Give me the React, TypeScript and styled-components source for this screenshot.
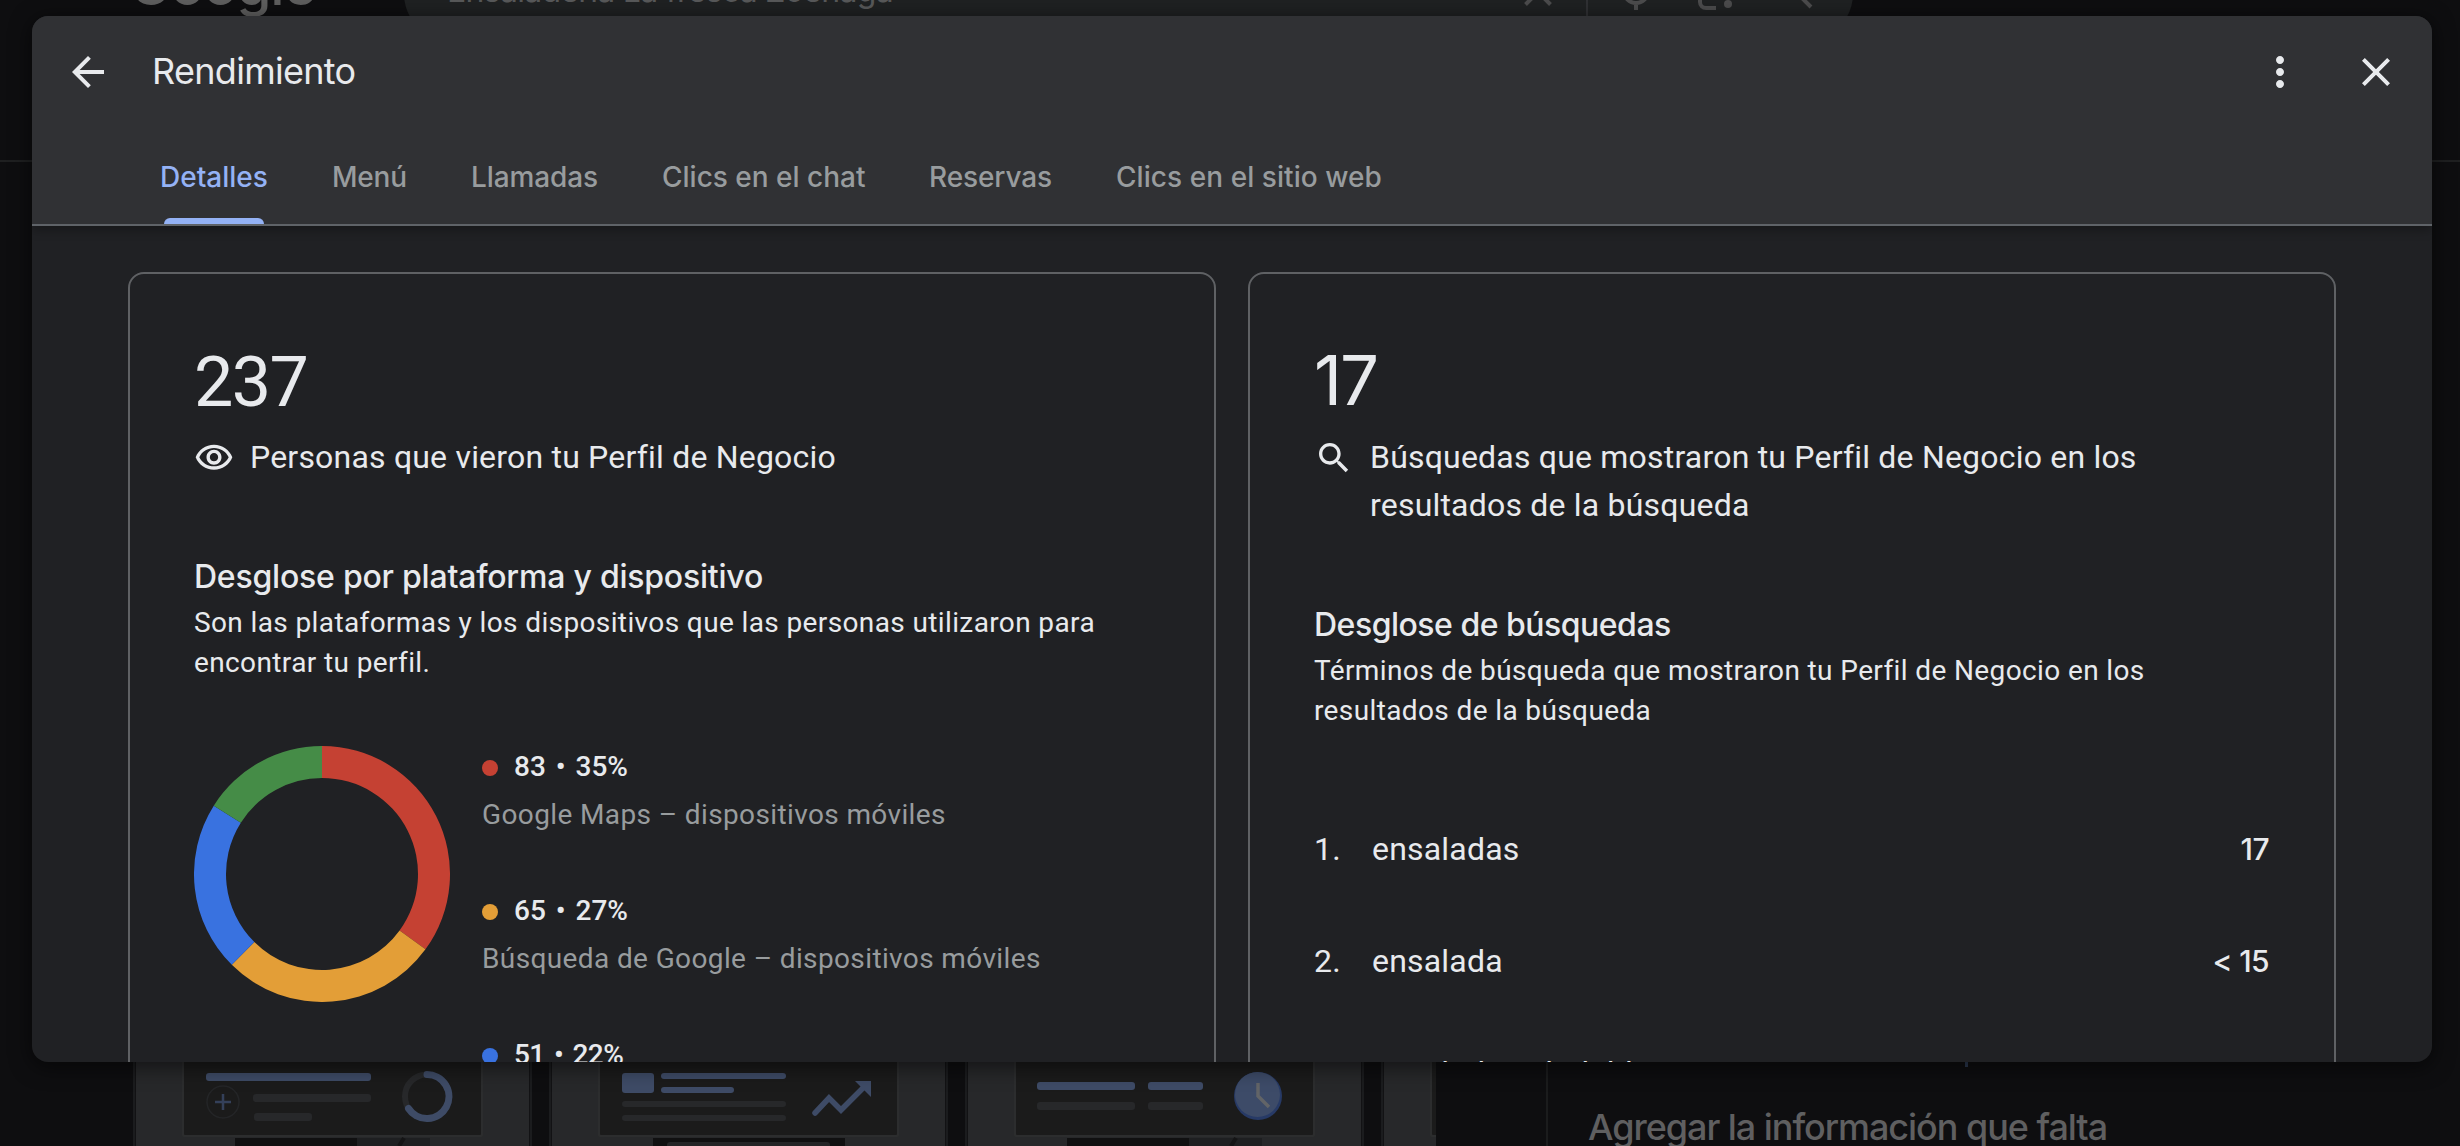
import React from "react";
import styled, { createGlobalStyle } from "styled-components";

const GOOGLE = `Inter, "Open Sans", sans-serif`;
const ROBOTO = `Roboto, "Noto Sans", sans-serif`;

const GlobalStyle = createGlobalStyle`
  *, *::before, *::after { box-sizing: border-box; }
  body { margin: 0; background: #0e0e10; overflow: hidden; -webkit-font-smoothing: antialiased; }
`;

const Screen = styled.div`
  position: relative;
  width: 2460px;
  height: 1146px;
  overflow: hidden;
  background: #0e0e10;
  font-family: ${ROBOTO};
`;

/* ---------- dimmed results page behind the dialog ---------- */

const Page = styled.div`
  display: flex;
  flex-direction: column;
  height: 1214px;
  margin-top: -68px;
`;

const PageHeader = styled.div`
  display: flex;
  flex: none;
  align-items: flex-start;
  height: 230px;
  padding: 16px 0 0 129px;
  border-bottom: 2px solid #1f2021;
`;

const Logo = styled.div`
  flex: none;
  width: 275px;
  padding-top: 2px;
  font: 500 57px/70px ${GOOGLE};
  letter-spacing: -1.4px;
  color: #5f5f5f;
`;

const SearchBar = styled.div`
  display: flex;
  flex: none;
  align-items: center;
  width: 1449px;
  height: 92px;
  padding: 0 24px 0 43px;
  border-radius: 46px;
  background: #1f2122;
`;

const Query = styled.div`
  flex: 1;
  padding-bottom: 6px;
  font: 400 32px/48px ${GOOGLE};
  letter-spacing: -0.7px;
  color: #58595a;
`;

const PageMain = styled.div`
  display: flex;
  flex: 1;
  padding-top: 900px;
`;

const TileStrip = styled.div`
  display: flex;
  flex: none;
  gap: 23px;
  width: 1304px;
  margin-left: 132px;
  padding-left: 4px;
  overflow: hidden;
`;

const Tile = styled.div`
  flex: none;
  width: 393px;
  height: 84px;
  background: #27282a;
  box-shadow: 0 0 0 1px #121214, 0 0 0 3px #1b1c1e;
`;

const SidePanel = styled.div`
  display: flex;
  flex-direction: column;
  margin-left: 110px;
  padding-left: 40px;
  border-left: 2px solid #1b1c1d;
`;

const SideLink = styled.div`
  height: 41px;
  padding-left: 377px;
`;

const SideLinkTail = styled.div`
  width: 3px;
  height: 5px;
  background: #2b3850;
`;

const SideTitle = styled.div`
  font: 500 36px/48px ${GOOGLE};
  letter-spacing: -1.05px;
  white-space: nowrap;
  color: #5f5f60;
`;

/* ---------- dialog ---------- */

const Dialog = styled.div`
  position: absolute;
  top: 16px;
  left: 32px;
  display: flex;
  flex-direction: column;
  width: 2400px;
  height: 1046px;
  overflow: hidden;
  border-radius: 16px;
  background: #202124;
  color: #e8eaed;
  box-shadow: 0 4px 20px 2px rgba(0, 0, 0, 0.5);
`;

const DialogHeader = styled.div`
  z-index: 1;
  flex: none;
  height: 210px;
  background: #303134;
  border-bottom: 2px solid #5f6368;
  box-shadow: 0 4px 10px rgba(0, 0, 0, 0.3);
`;

const TitleRow = styled.div`
  display: flex;
  align-items: center;
  height: 112px;
  padding: 0 32px;
`;

const Title = styled.div`
  flex: 1;
  margin-left: 40px;
  padding-bottom: 2px;
  font: 400 36px/48px ${GOOGLE};
  letter-spacing: -0.7px;
`;

const HeaderActions = styled.div`
  display: flex;
  gap: 48px;
`;

const TabRow = styled.div`
  display: flex;
  gap: 64px;
  height: 96px;
  padding-left: 128px;
`;

const Tab = styled.div<{ $active?: boolean; $width: number; $tracking?: number }>`
  position: relative;
  width: ${(p) => p.$width}px;
  padding-top: 29px;
  font: 500 28px/40px ${GOOGLE};
  letter-spacing: ${(p) => p.$tracking ?? 0}px;
  white-space: nowrap;
  color: ${(p) => (p.$active ? "#94b2f5" : "#989c9e")};
  ${(p) =>
    p.$active &&
    `&::after {
      content: "";
      position: absolute;
      left: 4px;
      right: 4px;
      bottom: 0;
      height: 6px;
      border-radius: 6px 6px 0 0;
      background: #94b2f5;
    }`}
`;

const CardRow = styled.div`
  display: flex;
  gap: 32px;
  padding: 46px 96px 0;
`;

const Card = styled.div`
  width: 1088px;
  height: 1100px;
  padding: 68px 64px 0;
  border: 2px solid #5f6164;
  border-radius: 16px;
`;

const BigNumber = styled.div`
  height: 80px;
  font: 400 70px/80px ${ROBOTO};
  letter-spacing: -1.6px;
`;

const NarrowBigNumber = styled(BigNumber)`
  font: 400 69px/77px ${GOOGLE};
  letter-spacing: -2px;
`;

const Metric = styled.div`
  display: flex;
  gap: 16px;
  margin-top: 11px;
  svg {
    flex: none;
    margin-top: 5px;
  }
`;

const MetricLabel = styled.div`
  font: 400 32px/48px ${ROBOTO};
  letter-spacing: 0.2px;
`;

const SectionTitle = styled.div<{ $tracking: number }>`
  margin-top: 72px;
  font: 500 32px/48px ${GOOGLE};
  letter-spacing: ${(p) => p.$tracking}px;
`;

const SectionText = styled.div`
  margin-top: 2px;
  font: 400 28px/40px ${ROBOTO};
  letter-spacing: 0.38px;
`;

const Breakdown = styled.div`
  display: flex;
  gap: 32px;
  margin-top: 63px;
`;

const Legend = styled.div`
  display: flex;
  flex-direction: column;
  gap: 56px;
  padding-top: 1px;
`;

const LegendItem = styled.div`
  display: flex;
  flex-direction: column;
  gap: 8px;
`;

const LegendValue = styled.div<{ $tracking?: number }>`
  display: flex;
  align-items: center;
  gap: 16px;
  height: 40px;
  font: 500 28px/40px ${ROBOTO};
  letter-spacing: ${(p) => p.$tracking ?? 0}px;
  word-spacing: 3px;
`;

const LegendDot = styled.span<{ $color: string }>`
  width: 16px;
  height: 16px;
  margin-top: 2px;
  border-radius: 50%;
  background: ${(p) => p.$color};
`;

const LegendLabel = styled.div`
  font: 400 28px/40px ${ROBOTO};
  letter-spacing: 0.38px;
  color: #989c9e;
`;

const TermList = styled.div`
  display: flex;
  flex-direction: column;
  margin-top: 62px;
`;

const Term = styled.div`
  display: flex;
  height: 112px;
  padding-top: 32px;
  font: 400 32px/48px ${ROBOTO};
  letter-spacing: 0.2px;
`;

const TermIndex = styled.div`
  width: 58px;
`;

const TermName = styled.div`
  flex: 1;
`;

const TermCount = styled.div`
  padding-right: 1px;
  font: 550 30px/48px ${GOOGLE};
  letter-spacing: -0.6px;
`;

/* ---------- drawings ---------- */

const Icon = ({ size, d, color = "currentColor" }: { size: number; d: string; color?: string }) => (
  <svg width={size} height={size} viewBox="0 0 24 24" fill={color}>
    <path d={d} />
  </svg>
);

const PATHS = {
  back: "M20 11H7.83l5.59-5.59L12 4l-8 8 8 8 1.41-1.41L7.83 13H20v-2z",
  more: "M12 8c1.1 0 2-.9 2-2s-.9-2-2-2-2 .9-2 2 .9 2 2 2zm0 2c-1.1 0-2 .9-2 2s.9 2 2 2 2-.9 2-2-.9-2-2-2zm0 6c-1.1 0-2 .9-2 2s.9 2 2 2 2-.9 2-2-.9-2-2-2z",
  close: "M19 6.41L17.59 5 12 10.59 6.41 5 5 6.41 10.59 12 5 17.59 6.41 19 12 13.41 17.59 19 19 17.59 13.41 12z",
  eye: "M12 6c3.79 0 7.17 2.13 8.82 5.5C19.17 14.87 15.79 17 12 17s-7.17-2.13-8.82-5.5C4.83 8.13 8.21 6 12 6m0-2C7 4 2.73 7.11 1 11.5 2.73 15.89 7 19 12 19s9.27-3.11 11-7.5C21.27 7.11 17 4 12 4zm0 5c1.38 0 2.5 1.12 2.5 2.5S13.38 14 12 14s-2.5-1.12-2.5-2.5S10.62 9 12 9m0-2c-2.48 0-4.5 2.02-4.5 4.5S9.52 16 12 16s4.5-2.02 4.5-4.5S14.48 7 12 7z",
  search: "M15.5 14h-.79l-.28-.27C15.41 12.59 16 11.11 16 9.5 16 5.91 13.09 3 9.5 3S3 5.91 3 9.5 5.91 16 9.5 16c1.61 0 3.09-.59 4.23-1.57l.27.28v.79l5 4.99L20.49 19l-4.99-5zm-6 0C7.01 14 5 11.99 5 9.5S7.01 5 9.5 5 14 7.01 14 9.5 11.99 14 9.5 14z",
};

const SearchTools = () => (
  <svg width="314" height="92" viewBox="1515 -52 314 92" fill="none" stroke="#4c4c4d" strokeWidth="4">
    <path d="M1525.5 -20.5L1550.5 4.5M1550.5 -20.5L1525.5 4.5" />
    <path d="M1587 -36V24" stroke="#303134" strokeWidth="2" />
    <path d="M1624 -9a12 12 0 0 0 24 0M1636 3V10" />
    <path d="M1716 8H1706a6 6 0 0 1 -6 -6V-4" />
    <circle cx="1728" cy="4" r="4" fill="#4c4c4d" stroke="none" />
    <circle cx="1792" cy="-12" r="9" />
    <path d="M1798 -6L1811 7" />
  </svg>
);

const SLICES = [
  { value: 83, color: "#c54133" },
  { value: 65, color: "#e39e37" },
  { value: 51, color: "#3972e0" },
  { value: 38, color: "#458c47" },
];

const Donut = () => {
  const total = SLICES.reduce((sum, s) => sum + s.value, 0);
  const at = (r: number, t: number) =>
    `${128 + r * Math.sin(t * 2 * Math.PI)} ${128 - r * Math.cos(t * 2 * Math.PI)}`;
  let start = 0;
  return (
    <svg width="256" height="256" viewBox="0 0 256 256">
      {SLICES.map((s) => {
        const a = start / total;
        start += s.value;
        const b = start / total;
        return (
          <path
            key={s.color}
            fill={s.color}
            d={`M${at(128, a)}A128 128 0 0 1 ${at(128, b)}L${at(96, b)}A96 96 0 0 0 ${at(96, a)}Z`}
          />
        );
      })}
    </svg>
  );
};

const BLUE = "#3e4b66";
const GREY = "#27282a";

const TileFrame = ({ children }: { children?: React.ReactNode }) => (
  <svg width="393" height="84" viewBox="0 0 393 84">
    <rect x="46" y="-10" width="301" height="85" rx="2" fill="#2c2d2e" />
    <rect x="48" y="-10" width="297" height="83" rx="1" fill="#1b1b1b" />
    {children}
  </svg>
);

const Bar = ({ x, y, w, h = 8, fill }: { x: number; y: number; w: number; h?: number; fill: string }) => (
  <rect x={x} y={y} width={w} height={h} rx={Math.min(h / 2, 3)} fill={fill} />
);

const PhoneStand = () => (
  <>
    <rect x="99" y="76" width="122" height="10" fill="#101011" />
    <rect x="221" y="76" width="73" height="10" fill="#1e1f21" />
    <path d="M263 84L268 76" stroke="#141415" strokeWidth="4" />
  </>
);

const ProfileTile = () => (
  <TileFrame>
    <Bar x={70} y={11} w={165} fill={BLUE} />
    <circle cx="87" cy="40" r="16" fill="none" stroke="#242527" strokeWidth="1.5" />
    <path d="M79 40H95M87 32V48" stroke="#34405a" strokeWidth="2.5" />
    <Bar x={117} y={32} w={118} fill={GREY} />
    <Bar x={118} y={51} w={58} fill={GREY} />
    <circle cx="291" cy="34.5" r="22" fill="none" stroke={GREY} strokeWidth="6" />
    <path d="M291 12.5A22 22 0 1 1 272.5 46.5" fill="none" stroke={BLUE} strokeWidth="7" strokeLinecap="round" />
    <PhoneStand />
  </TileFrame>
);

const GrowthTile = () => (
  <TileFrame>
    <rect x="70" y="11" width="32" height="20" rx="3" fill={BLUE} />
    <Bar x={109} y={11} w={125} h={6} fill={BLUE} />
    <Bar x={109} y={25} w={73} h={6} fill={BLUE} />
    <Bar x={70} y={39} w={164} h={6} fill={GREY} />
    <Bar x={70} y={53} w={164} h={6} fill={GREY} />
    <path d="M263 51L277 36L289 48L313 24" fill="none" stroke={BLUE} strokeWidth="5.5" strokeLinecap="round" />
    <path d="M303 19H319V35Z" fill={BLUE} />
    <rect x="101" y="76" width="192" height="10" fill="#101011" />
    <rect x="115" y="80" width="163" height="8" rx="3" fill="#242527" />
  </TileFrame>
);

const ScheduleTile = () => (
  <TileFrame>
    <Bar x={69} y={20} w={98} fill={BLUE} />
    <Bar x={180} y={20} w={55} fill={BLUE} />
    <Bar x={69} y={40} w={98} fill={GREY} />
    <Bar x={180} y={40} w={55} fill={GREY} />
    <circle cx="290" cy="34" r="24" fill="#273a66" />
    <circle cx="289.5" cy="32.5" r="22.5" fill="#3d4b68" />
    <path d="M290 21V34L301 45" fill="none" stroke="#626467" strokeWidth="3.5" />
    <PhoneStand />
  </TileFrame>
);

const LEGEND = [
  { color: "#c54133", value: "83 • 35%", label: "Google Maps – dispositivos móviles" },
  { color: "#e39e37", value: "65 • 27%", label: "Búsqueda de Google – dispositivos móviles" },
  { color: "#3972e0", value: "51 • 22%", tracking: -0.6 },
];

const TERMS = [
  { name: "ensaladas", count: "17" },
  { name: "ensalada", count: "< 15" },
  { name: "ensalada saludable" },
];

const TABS = [
  { label: "Detalles", width: 108 },
  { label: "Menú", width: 75, tracking: -0.2 },
  { label: "Llamadas", width: 127, tracking: -0.1 },
  { label: "Clics en el chat", width: 203 },
  { label: "Reservas", width: 123, tracking: -0.1 },
  { label: "Clics en el sitio web", width: 266, tracking: 0.06 },
];

export default function App() {
  return (
    <Screen>
      <GlobalStyle />
      <Page>
        <PageHeader>
          <Logo>Google</Logo>
          <SearchBar>
            <Query>Ensaladería La fresca Zoenaga</Query>
            <SearchTools />
          </SearchBar>
        </PageHeader>
        <PageMain>
          <TileStrip>
            <Tile><ProfileTile /></Tile>
            <Tile><GrowthTile /></Tile>
            <Tile><ScheduleTile /></Tile>
            <Tile><TileFrame /></Tile>
          </TileStrip>
          <SidePanel>
            <SideLink><SideLinkTail /></SideLink>
            <SideTitle>Agregar la información que falta</SideTitle>
          </SidePanel>
        </PageMain>
      </Page>

      <Dialog>
        <DialogHeader>
          <TitleRow>
            <Icon size={48} d={PATHS.back} />
            <Title>Rendimiento</Title>
            <HeaderActions>
              <Icon size={48} d={PATHS.more} />
              <Icon size={48} d={PATHS.close} />
            </HeaderActions>
          </TitleRow>
          <TabRow>
            {TABS.map((t, i) => (
              <Tab key={t.label} $active={i === 0} $width={t.width} $tracking={t.tracking}>
                {t.label}
              </Tab>
            ))}
          </TabRow>
        </DialogHeader>
        <CardRow>
          <Card>
            <BigNumber>237</BigNumber>
            <Metric>
              <Icon size={40} d={PATHS.eye} />
              <MetricLabel>Personas que vieron tu Perfil de Negocio</MetricLabel>
            </Metric>
            <SectionTitle $tracking={-0.22}>Desglose por plataforma y dispositivo</SectionTitle>
            <SectionText>
              Son las plataformas y los dispositivos que las personas utilizaron para
              <br />
              encontrar tu perfil.
            </SectionText>
            <Breakdown>
              <Donut />
              <Legend>
                {LEGEND.map((l) => (
                  <LegendItem key={l.color}>
                    <LegendValue $tracking={l.tracking}>
                      <LegendDot $color={l.color} />
                      {l.value}
                    </LegendValue>
                    {l.label && <LegendLabel>{l.label}</LegendLabel>}
                  </LegendItem>
                ))}
              </Legend>
            </Breakdown>
          </Card>
          <Card>
            <NarrowBigNumber>17</NarrowBigNumber>
            <Metric>
              <Icon size={40} d={PATHS.search} />
              <MetricLabel>
                Búsquedas que mostraron tu Perfil de Negocio en los
                <br />
                resultados de la búsqueda
              </MetricLabel>
            </Metric>
            <SectionTitle $tracking={-0.5}>Desglose de búsquedas</SectionTitle>
            <SectionText>
              Términos de búsqueda que mostraron tu Perfil de Negocio en los
              <br />
              resultados de la búsqueda
            </SectionText>
            <TermList>
              {TERMS.map((t, i) => (
                <Term key={t.name}>
                  <TermIndex>{i + 1}.</TermIndex>
                  <TermName>{t.name}</TermName>
                  {t.count && <TermCount>{t.count}</TermCount>}
                </Term>
              ))}
            </TermList>
          </Card>
        </CardRow>
      </Dialog>
    </Screen>
  );
}
